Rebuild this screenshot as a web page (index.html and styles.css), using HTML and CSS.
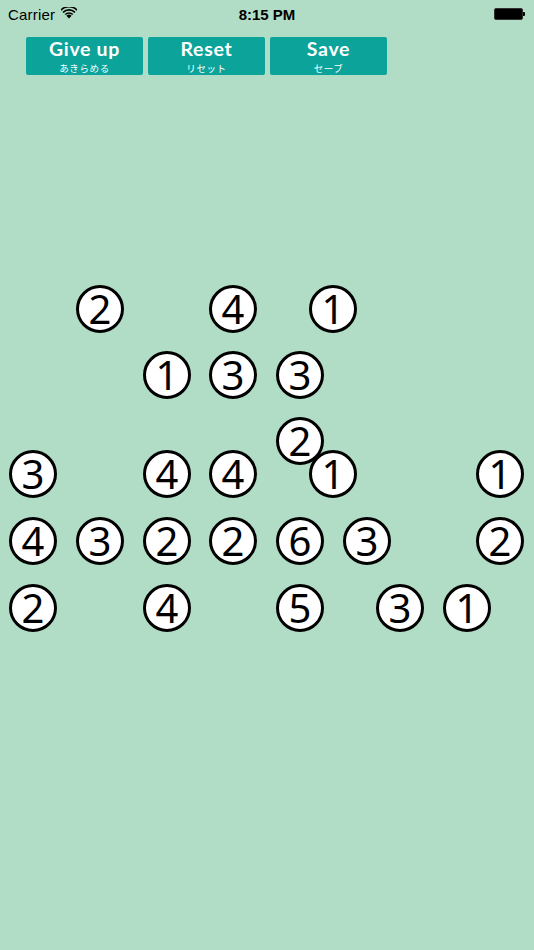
FILE: index.html
```html
<!DOCTYPE html>
<html>
<head>
<meta charset="utf-8">
<link rel="stylesheet" href="styles.css">
</head>
<body>
<div class="screen">
  <div class="status">
    <div class="carrier">Carrier
      <svg class="wifi" width="16" height="12" viewBox="0 0 16 12"><path d="M8 11.5 L5.4 8.7 A3.7 3.7 0 0 1 10.6 8.7 Z" fill="#000"/><path d="M3.7 6.9 A6.2 6.2 0 0 1 12.3 6.9 L11.2 8.1 A4.6 4.6 0 0 0 4.8 8.1 Z" fill="#000"/><path d="M1.5 4.7 A9.2 9.2 0 0 1 14.5 4.7 L13.4 5.9 A7.6 7.6 0 0 0 2.6 5.9 Z" fill="#000"/><path d="M-0.6 2.5 A12.2 12.2 0 0 1 16.6 2.5 L15.5 3.7 A10.6 10.6 0 0 0 0.5 3.7 Z" fill="#000"/></svg>
    </div>
    <div class="time">8:15 PM</div>
    <div class="battery"><div class="batt-body"></div><div class="batt-tip"></div></div>
  </div>
  <div class="toolbar">
    <div class="btn"><div class="btn-main">Give up</div><div class="btn-sub">あきらめる</div></div>
    <div class="btn"><div class="btn-main">Reset</div><div class="btn-sub">リセット</div></div>
    <div class="btn"><div class="btn-main">Save</div><div class="btn-sub">セーブ</div></div>
  </div>
  <div class="board">
    <div class="node" style="left:100px;top:309px">2</div>
    <div class="node" style="left:233px;top:309px">4</div>
    <div class="node" style="left:333px;top:309px">1</div>
    <div class="node" style="left:167px;top:375px">1</div>
    <div class="node" style="left:233px;top:375px">3</div>
    <div class="node" style="left:300px;top:375px">3</div>
    <div class="node" style="left:33px;top:474px">3</div>
    <div class="node" style="left:167px;top:474px">4</div>
    <div class="node" style="left:233px;top:474px">4</div>
    <div class="node" style="left:333px;top:474px">1</div>
    <div class="node" style="left:300px;top:441px">2</div>
    <div class="node" style="left:500px;top:474px">1</div>
    <div class="node" style="left:33px;top:541px">4</div>
    <div class="node" style="left:100px;top:541px">3</div>
    <div class="node" style="left:167px;top:541px">2</div>
    <div class="node" style="left:233px;top:541px">2</div>
    <div class="node" style="left:300px;top:541px">6</div>
    <div class="node" style="left:367px;top:541px">3</div>
    <div class="node" style="left:500px;top:541px">2</div>
    <div class="node" style="left:33px;top:608px">2</div>
    <div class="node" style="left:167px;top:608px">4</div>
    <div class="node" style="left:300px;top:608px">5</div>
    <div class="node" style="left:400px;top:608px">3</div>
    <div class="node" style="left:467px;top:608px">1</div>
  </div>
</div>
</body>
</html>
```
FILE: styles.css
```css
html, body {
  margin: 0;
  padding: 0;
}
body {
  background: #b1dcc5;
  font-family: "Liberation Sans", Arial, sans-serif;
}
.screen {
  position: relative;
  width: 534px;
  height: 950px;
  overflow: hidden;
  background: #b1dcc5;
}
.status {
  height: 28px;
  display: flex;
  align-items: center;
  justify-content: space-between;
  padding: 0 9px 0 8px;
  font-size: 15px;
  color: #000;
  position: relative;
}
.carrier {
  display: flex;
  align-items: center;
  gap: 6px;
  letter-spacing: 0.2px;
}
.wifi {
  margin-top: -2px;
}
.time {
  position: absolute;
  left: 0;
  right: 0;
  text-align: center;
  font-weight: bold;
  font-family: "Liberation Sans", Arial, sans-serif;
  font-size: 15px;
  pointer-events: none;
}
.battery {
  display: flex;
  align-items: center;
}
.batt-body {
  width: 27px;
  height: 10px;
  background: #000;
  border: 1px solid #333;
  border-radius: 2px;
}
.batt-tip {
  width: 2px;
  height: 4px;
  background: #000;
  border-radius: 0 1px 1px 0;
}
.toolbar {
  display: flex;
  gap: 5px;
  padding: 9px 0 0 26px;
}
.btn {
  width: 117px;
  height: 38px;
  background: #0ba39a;
  border-radius: 2px;
  color: #fff;
  display: flex;
  flex-direction: column;
  align-items: center;
  justify-content: flex-start;
  box-sizing: border-box;
  padding-top: 0;
}
.btn-main {
  display: block;
  font-family: Lato, "Open Sans", sans-serif;
  font-weight: 700;
  font-size: 19.5px;
  line-height: 24px;
  height: 24px;
  letter-spacing: 0.7px;
}
.btn-sub {
  display: block;
  font-family: "Noto Sans CJK JP", sans-serif;
  font-size: 9.5px;
  line-height: 14px;
  height: 14px;
  letter-spacing: 0.6px;
}
.board {
  position: absolute;
  left: 0;
  top: 0;
  width: 534px;
  height: 950px;
}
.node {
  position: absolute;
  width: 48px;
  height: 48px;
  margin: -24px 0 0 -24px;
  box-sizing: border-box;
  border: 3px solid #000;
  border-radius: 50%;
  background: #fff;
  display: flex;
  align-items: center;
  justify-content: center;
  font-family: "Noto Sans", sans-serif;
  font-size: 40px;
  line-height: 1;
  color: #000;
  padding-bottom: 1px;
}
```
